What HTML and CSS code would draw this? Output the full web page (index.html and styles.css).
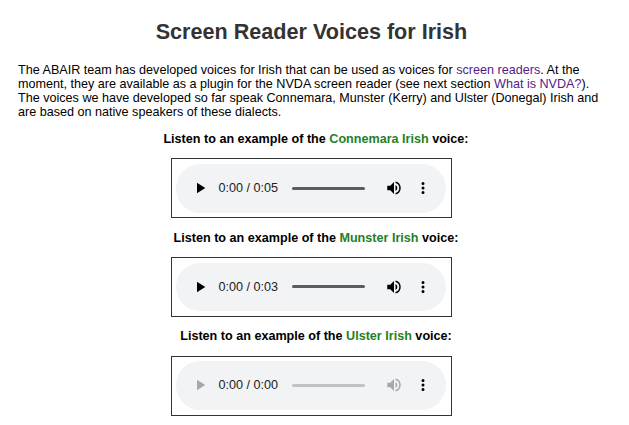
FILE: index.html
```html
<!DOCTYPE html>
<html lang="en">
<head>
<meta charset="utf-8">
<title>Screen Reader Voices for Irish</title>
<link rel="stylesheet" href="styles.css">
</head>
<body>
<main>
<h1>Screen Reader Voices for Irish</h1>
<p class="intro">The ABAIR team has developed voices for Irish that can be used as voices for <a href="#">screen readers</a>. At the<br>moment, they are available as a plugin for the NVDA screen reader (see next section <a href="#">What is NVDA?</a>).<br>The voices we have developed so far speak Connemara, Munster (Kerry) and Ulster (Donegal) Irish and<br>are based on native speakers of these dialects.</p>
<section class="voice">
<h2>Listen to an example of the <span>Connemara Irish</span> voice:</h2>
<div class="frame"><div class="player">
<svg class="icon play" viewBox="0 0 24 24"><path d="M8 5v14l11-7z"/></svg>
<span class="time">0:00 / 0:05</span><span class="track"></span>
<svg class="icon volume" viewBox="0 0 24 24"><path d="M3 9v6h4l5 5V4L7 9H3zm13.5 3A4.5 4.5 0 0 0 14 7.97v8.05A4.47 4.47 0 0 0 16.5 12zM14 3.23v2.06a7 7 0 0 1 0 13.42v2.06a9 9 0 0 0 0-17.54z"/></svg>
<svg class="icon more" viewBox="0 0 24 24"><path d="M12 8a2 2 0 1 0 0-4 2 2 0 0 0 0 4zm0 2a2 2 0 1 0 0 4 2 2 0 0 0 0-4zm0 6a2 2 0 1 0 0 4 2 2 0 0 0 0-4z"/></svg>
</div></div>
</section>
<section class="voice">
<h2>Listen to an example of the <span>Munster Irish</span> voice:</h2>
<div class="frame"><div class="player">
<svg class="icon play" viewBox="0 0 24 24"><path d="M8 5v14l11-7z"/></svg>
<span class="time">0:00 / 0:03</span><span class="track"></span>
<svg class="icon volume" viewBox="0 0 24 24"><path d="M3 9v6h4l5 5V4L7 9H3zm13.5 3A4.5 4.5 0 0 0 14 7.97v8.05A4.47 4.47 0 0 0 16.5 12zM14 3.23v2.06a7 7 0 0 1 0 13.42v2.06a9 9 0 0 0 0-17.54z"/></svg>
<svg class="icon more" viewBox="0 0 24 24"><path d="M12 8a2 2 0 1 0 0-4 2 2 0 0 0 0 4zm0 2a2 2 0 1 0 0 4 2 2 0 0 0 0-4zm0 6a2 2 0 1 0 0 4 2 2 0 0 0 0-4z"/></svg>
</div></div>
</section>
<section class="voice">
<h2>Listen to an example of the <span>Ulster Irish</span> voice:</h2>
<div class="frame"><div class="player disabled">
<svg class="icon play" viewBox="0 0 24 24"><path d="M8 5v14l11-7z"/></svg>
<span class="time">0:00 / 0:00</span><span class="track"></span>
<svg class="icon volume" viewBox="0 0 24 24"><path d="M3 9v6h4l5 5V4L7 9H3zm13.5 3A4.5 4.5 0 0 0 14 7.97v8.05A4.47 4.47 0 0 0 16.5 12zM14 3.23v2.06a7 7 0 0 1 0 13.42v2.06a9 9 0 0 0 0-17.54z"/></svg>
<svg class="icon more" viewBox="0 0 24 24"><path d="M12 8a2 2 0 1 0 0-4 2 2 0 0 0 0 4zm0 2a2 2 0 1 0 0 4 2 2 0 0 0 0-4zm0 6a2 2 0 1 0 0 4 2 2 0 0 0 0-4z"/></svg>
</div></div>
</section>
</main>
</body>
</html>
```
FILE: styles.css
```css
* { box-sizing: border-box; }
body { margin: 0; background: #fff; color: #000; font-family: "Liberation Sans", Arial, sans-serif; font-size: 12.604px; }
main { padding: 18px 7px 0 0; }
h1 { margin: 0 0 17px; padding-left: 1px; color: #333; font-size: 21.6px; line-height: 28px; text-align: center; }
.intro { margin: 0 0 13.2px 18px; line-height: 14px; white-space: nowrap; }
a { color: #551a8b; text-decoration: none; }
.voice { display: flex; flex-direction: column; align-items: center; margin-bottom: 12.4px; }
h2 { margin: 0 0 12.2px; padding-left: 10px; font-size: 12.6px; line-height: 14px; white-space: nowrap; }
h2 span { color: #267f26; }
.frame { width: 281px; height: 60px; padding: 4.6px 5px 4.6px 4px; border: 1px solid #333; }
.player { display: flex; align-items: center; height: 48.6px; padding-left: 15px; border-radius: 24.3px; background: #f1f3f4; }
.icon { width: 18px; height: 18px; flex: none; }
.time { width: 60px; margin-left: 9.9px; font-size: 12.6px; color: #202124; white-space: nowrap; }
.track { width: 73px; height: 3px; margin-left: 13.8px; border-radius: 2px; background: #5b5c5c; }
.volume { margin-left: 20px; }
.more { margin-left: 11px; }
.disabled .play, .disabled .volume { opacity: .3; }
.disabled .track { background: #c1c3c3; }
```
